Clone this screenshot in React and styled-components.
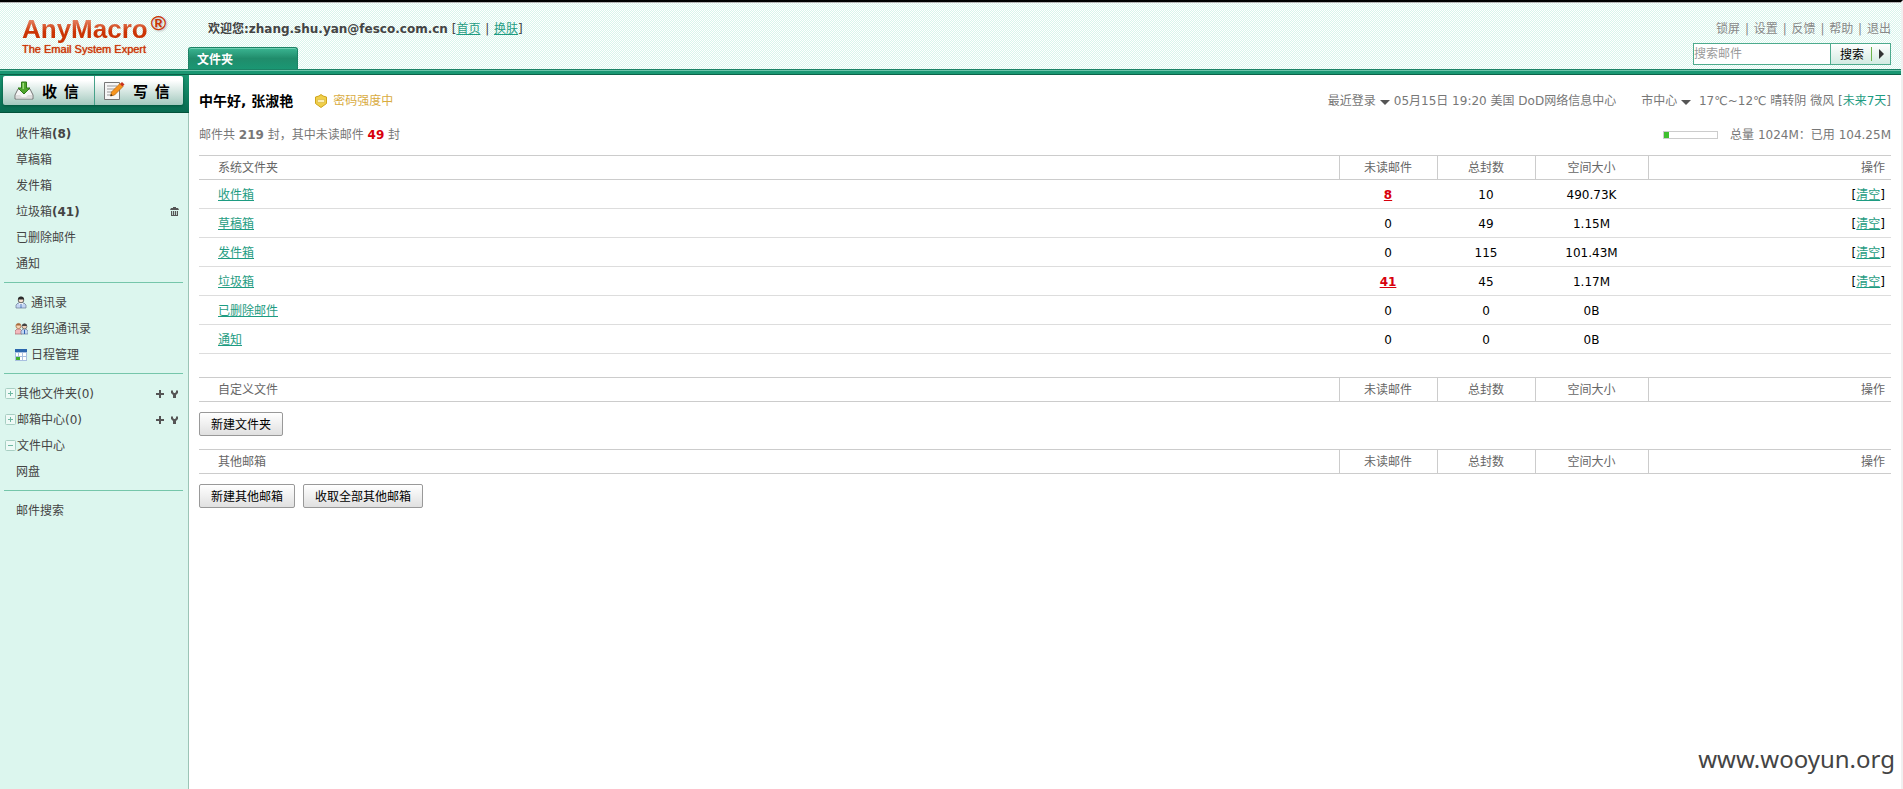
import React, { useState } from 'react';
import styled, { createGlobalStyle } from 'styled-components';

const GlobalStyle = createGlobalStyle`
  * {
    box-sizing: border-box;
  }
  body {
    margin: 0;
    background: #fff;
    color: #000;
    font: 12px/20px 'DejaVu Sans', 'Noto Sans CJK SC', sans-serif;
  }
  button, input {
    font: inherit;
  }
`;

const Page = styled.div`
  display: flex;
  flex-direction: column;
  min-height: 100vh;
  border-top: 2px solid #000;
  border-right: 2px solid #f0f0f0;
`;

/* ---------- header ---------- */

const Header = styled.header`
  display: flex;
  height: 67px;
  border-top: 1px solid #b4b4b4;
  background: repeating-conic-gradient(#ffffff 0% 25%, #d8f5ec 0% 50%) 0 0 / 2px 2px;
`;

const Logo = styled.div`
  width: 188px;
  flex-shrink: 0;
  padding: 11px 0 0 22px;
  font-family: 'Liberation Sans', Arial, sans-serif;
  color: #cb3404;
`;

const LogoName = styled.div`
  display: flex;
  align-items: flex-start;
  height: 26px;
  font-size: 26px;
  line-height: 30px;
  font-weight: bold;
  text-shadow: 1px 1px 2px #b8b8b8;

  span {
    background: linear-gradient(#e88a6c 15%, #cb3404 60%);
    background-clip: text;
    color: transparent;
    text-shadow: none;
  }
  sup {
    font-size: 21px;
    line-height: 18px;
    margin-left: 3px;
    vertical-align: top;
  }
`;

const Tagline = styled.div`
  font-size: 11px;
  line-height: 18px;
  text-shadow: 0 0 1px #cb3404;
`;

const HeaderLeft = styled.div`
  flex: 1;
  display: flex;
  flex-direction: column;
  justify-content: space-between;
`;

const Welcome = styled.div`
  padding: 16px 0 0 20px;
  color: #444;
`;

const Link = styled.a`
  color: ${(p) => p.$color || '#1e9c82'};
  font-weight: ${(p) => (p.$bold ? 'bold' : 'normal')};
  text-decoration: ${(p) => (p.$plain ? 'none' : 'underline')};
`;

const Bar = styled.span`
  margin: 0 1px;
`;

const Tab = styled.div`
  width: 110px;
  height: 22px;
  padding-left: 8px;
  border: 1px solid #1b8265;
  border-bottom: 0;
  border-radius: 3px 3px 0 0;
  background: linear-gradient(#3bb592, #208c6b 50%, #1a9773);
  box-shadow: inset 0 1px #6fd0b3;
  color: #fff;
  font-weight: bold;
  line-height: 24px;
`;

const HeaderRight = styled.div`
  display: flex;
  flex-direction: column;
  align-items: flex-end;
  padding: 16px 10px 0 0;
`;

const TopLinks = styled.nav`
  color: #888;
  white-space: nowrap;
`;

const SearchForm = styled.form`
  display: flex;
  height: 22px;
  width: 198px;
  margin-top: 4px;
  border: 1px solid #4dab8d;
`;

const SearchInput = styled.input`
  flex: 1;
  min-width: 0;
  padding: 0;
  border: 0;
  background: #fff;
  line-height: 18px;
  outline: none;

  &::placeholder {
    color: #999;
    opacity: 1;
  }
`;

const SearchButton = styled.button`
  width: 41px;
  padding: 1px 0 0 9px;
  border: 0;
  border-left: 1px solid #4dab8d;
  background: linear-gradient(#fff, #d3ebe2);
  line-height: 20px;
  text-align: left;
`;

const SearchMore = styled.button`
  display: flex;
  align-items: center;
  width: 19px;
  padding: 0;
  border: 0;
  background: linear-gradient(#fff, #d3ebe2);

  &::before {
    content: '';
    height: 14px;
    margin-right: 7px;
    border-left: 1px solid #6cb24c;
  }
`;

const Strip = styled.div`
  height: 6px;
  background: linear-gradient(#1b8265 1px, #6cc3aa 1px 2px, #1a9773 2px 5px, #0c6349 5px);
`;

/* ---------- sidebar ---------- */

const Body = styled.div`
  flex: 1;
  display: flex;
`;

const Sidebar = styled.aside`
  width: 189px;
  flex-shrink: 0;
  border-right: 1px solid #9cc4b6;
  background: #dcf6ee;
  color: #444;
`;

const ActionBar = styled.div`
  height: 38px;
  margin-right: -1px;
  padding: 1px 6px 7px 3px;
  border-bottom: 1px solid #02523a;
  background: linear-gradient(#1a9773, #086b50);
`;

const Actions = styled.div`
  display: flex;
  height: 100%;
  border-radius: 2px;
  background: linear-gradient(#fff 15%, #a3c9be);
  box-shadow: 0 1px 3px #02523a;
`;

const ActionButton = styled.button`
  flex: 1;
  display: flex;
  align-items: center;
  gap: 8px;
  padding: 0 0 0 ${(p) => (p.$divided ? 8 : 11)}px;
  border: 0;
  border-left: ${(p) => (p.$divided ? '1px solid #46a189' : '0')};
  background: none;
  font: bold 15px/24px 'Noto Sans CJK SC', sans-serif;
  white-space: pre;
`;

const Menu = styled.ul`
  margin: 0;
  padding: 0;
  list-style: none;

  & + & {
    margin: 6px 5px 0 4px;
    padding-top: 6px;
    border-top: 1px solid #75c6aa;
  }
`;

const MenuBox = styled.nav`
  padding-top: 7px;
`;

const MenuItem = styled.li`
  display: flex;
  align-items: center;
  height: 26px;
  padding-top: 1px;
  padding-left: ${(p) => p.$indent}px;

  a {
    color: inherit;
    text-decoration: none;
  }
`;

const ItemIcon = styled.span`
  display: flex;
  width: ${(p) => p.$width}px;
`;

const Tools = styled.span`
  display: flex;
  align-items: center;
  gap: 7px;
  margin-left: auto;
  margin-right: ${(p) => p.$right}px;
`;

const IconButton = styled.button`
  display: flex;
  padding: 0;
  border: 0;
  background: none;
  color: #555;
`;

/* ---------- content ---------- */

const Main = styled.main`
  flex: 1;
  display: flex;
  flex-direction: column;
  padding: 16px 10px 0;
`;

const InfoRow = styled.div`
  display: flex;
  align-items: center;
  height: 20px;
  margin-bottom: ${(p) => p.$gap}px;
  color: #777;
  white-space: nowrap;
`;

const Greeting = styled.h1`
  margin: 0 22px 0 0;
  color: #000;
  font-size: 14px;
  line-height: 20px;
`;

const Strength = styled.span`
  display: flex;
  align-items: center;
  gap: 6px;
  color: #d9ac3f;
`;

const Push = styled.span`
  display: flex;
  align-items: center;
  margin-left: auto;
`;

const Place = styled.span`
  display: flex;
  align-items: center;
  margin-left: 25px;
`;

const Caret = styled.i`
  margin: 2px 4px 0;
  border: 5px solid transparent;
  border-top-color: #555;
  border-bottom: 0;
`;

const Unread = styled.b`
  color: #d8000c;
`;

const Quota = styled.span`
  width: 55px;
  height: 8px;
  margin-right: 12px;
  border: 1px solid #ccc;
  background: #fff;
`;

const QuotaFill = styled.span`
  display: block;
  height: 6px;
  background: #3fc02f;
`;

const Table = styled.table`
  width: 100%;
  margin-bottom: ${(p) => p.$gap}px;
  border-collapse: collapse;
  table-layout: fixed;
`;

const Th = styled.th`
  width: ${(p) => p.$width || 'auto'};
  height: 24px;
  padding: ${(p) => p.$pad || '1px 0 0'};
  border: solid #ccc;
  border-width: ${(p) => (p.$first ? '1px 0' : '1px 0 1px 1px')};
  color: #666;
  font-weight: normal;
  text-align: ${(p) => p.$align || 'center'};
`;

const Td = styled.td`
  height: 29px;
  padding: ${(p) => p.$pad || '2px 0 0'};
  border-bottom: 1px solid #ddd;
  text-align: ${(p) => p.$align || 'center'};
`;

const ButtonRow = styled.div`
  display: flex;
  gap: 8px;
  margin-bottom: 13px;
`;

const Button = styled.button`
  height: 24px;
  padding: 1px 11px 0;
  border: 1px solid #999;
  border-radius: 2px;
  background: linear-gradient(#fff, #e0e0e0);
  line-height: 20px;
`;

const Watermark = styled.div`
  margin: auto -4px 14px auto;
  color: #444;
  font: 24px/32px 'Noto Sans', sans-serif;
`;

/* ---------- icons ---------- */

const InboxIcon = () => (
  <svg width="20" height="20" viewBox="0 0 20 20">
    <path d="M4 8h12l3 6v4H1v-4z" fill="#f4f4f4" stroke="#777" />
    <path d="M2 14h4l2 2h4l2-2h4v3.5H2z" fill="#ddd" />
    <path d="M7.500 1h5v6h3.500l-6 6-6-6h3.500z" fill="#4fa52c" stroke="#2f7a17" />
    <path d="M8.500 2h1.500v6h-1.500z" fill="#9bdc7a" />
  </svg>
);

const WriteIcon = () => (
  <svg width="22" height="20" viewBox="0 0 22 20">
    <path d="M1.500 1.500h15v17h-15z" fill="#f6f6f6" stroke="#777" />
    <path d="M4 5h10M4 8h8M4 11h5M4 14h4" stroke="#999" />
    <path d="M7.500 15l1-4 8.500-8.500 3 3L11.500 14z" fill="#f7941d" stroke="#b86a12" strokeWidth=".8" />
    <path d="M17 3l2-2 2.500 2.500-2 2z" fill="#c8321c" />
    <path d="M7.500 15l.6-2 1.400 1.400z" fill="#222" />
  </svg>
);

const PersonIcon = () => (
  <svg width="12" height="13" viewBox="0 0 12 13">
    <path d="M1 12V9l2-2h6l2 2v3z" fill="#c3d6f3" stroke="#6a7894" strokeWidth=".7" />
    <path d="M4 7h4l-2 5z" fill="#fff" />
    <path d="M5.500 8h1v4h-1z" fill="#2f62b4" />
    <circle cx="6" cy="4" r="2.800" fill="#f7e2d2" stroke="#444" strokeWidth=".8" />
    <path d="M3 3.500a3 3 0 016 0z" fill="#2a2a2a" />
  </svg>
);

const PeopleIcon = () => (
  <svg width="13" height="13" viewBox="0 0 13 13">
    <path d="M0 12V9l2-2h3l2 2v3z" fill="#f3b9bd" stroke="#a5676b" strokeWidth=".7" />
    <circle cx="3.500" cy="4" r="2.600" fill="#f7d6b8" stroke="#a0643a" strokeWidth=".7" />
    <path d="M1 3.500a2.600 2.600 0 015 0z" fill="#a86a3a" />
    <path d="M6 12V9l2-2h3l2 2v3z" fill="#c3d6f3" stroke="#6a7894" strokeWidth=".7" />
    <path d="M9 8h1v4h-1z" fill="#2f62b4" />
    <circle cx="9.500" cy="4.500" r="2.400" fill="#f2cfb4" stroke="#555" strokeWidth=".7" />
    <path d="M7 4a2.500 2.500 0 015 0z" fill="#444" />
  </svg>
);

const CalendarIcon = () => (
  <svg width="12" height="12" viewBox="0 0 12 12">
    <path d="M0 0h12v12H0z" fill="#a9c0e0" />
    <path d="M0 0h12v3H0z" fill="#2b66ad" />
    <path d="M1 4h2v3H1zM4 4h3v3H4zM8 4h3v3H8zM4 8h3v3H4zM8 8h3v3H8z" fill="#fff" />
    <path d="M1 8h4v3H1z" fill="#3faf2b" />
  </svg>
);

const TrashIcon = () => (
  <svg width="9" height="9" viewBox="0 0 9 9" fill="currentColor">
    <path d="M3 0h3v1h2l1 2H0l1-2h2zM1 4h7v5H1z" />
    <path d="M2.500 4v4M4.500 4v4M6.500 4v4" stroke="#dcf6ee" strokeWidth=".8" />
  </svg>
);

const PlusIcon = () => (
  <svg width="8" height="8" viewBox="0 0 8 8" fill="currentColor">
    <path d="M3 0h2v3h3v2H5v3H3V5H0V3h3z" />
  </svg>
);

const WrenchIcon = () => (
  <svg width="7" height="8" viewBox="0 0 7 8" fill="currentColor">
    <path d="M0 1l1-1 1 1v1l1 1h1l1-1V1l1-1 1 1v2L5 5v3H2V5L0 3z" />
  </svg>
);

const ToggleIcon = ({ open }) => (
  <svg width="11" height="11" viewBox="0 0 11 11" fill="none">
    <rect x=".5" y=".5" width="10" height="10" rx="1" fill="#eefaf6" stroke="#a8cfc3" />
    <path d={open ? 'M3 5.500h5' : 'M3 5.500h5M5.500 3v5'} stroke="#6fb8a2" />
  </svg>
);

const ShieldIcon = () => (
  <svg width="12" height="14" viewBox="0 0 12 14">
    <path d="M6 .5l2 1.500 3.500 1v6.500L6 13.500.5 9.500V3L4 2z" fill="#f0cf4a" stroke="#cfa51c" />
    <path d="M2.500 5.500h7v3h-7z" fill="#fbeeb4" stroke="#d9b53a" strokeWidth=".6" />
  </svg>
);

/* ---------- data ---------- */

const boxes = [
  { name: '收件箱', count: 8 },
  { name: '草稿箱' },
  { name: '发件箱' },
  { name: '垃圾箱', count: 41, trash: true },
  { name: '已删除邮件' },
  { name: '通知' },
];

const contacts = [
  { name: '通讯录', Icon: PersonIcon },
  { name: '组织通讯录', Icon: PeopleIcon },
  { name: '日程管理', Icon: CalendarIcon },
];

const folders = [
  { name: '收件箱', unread: 8, total: 10, size: '490.73K', clear: true },
  { name: '草稿箱', unread: 0, total: 49, size: '1.15M', clear: true },
  { name: '发件箱', unread: 0, total: 115, size: '101.43M', clear: true },
  { name: '垃圾箱', unread: 41, total: 45, size: '1.17M', clear: true },
  { name: '已删除邮件', unread: 0, total: 0, size: '0B' },
  { name: '通知', unread: 0, total: 0, size: '0B' },
];

const topLinks = ['锁屏', '设置', '反馈', '帮助', '退出'];

function FolderTable({ title, rows = [], gap }) {
  return (
    <Table $gap={gap}>
      <thead>
        <tr>
          <Th $first $align="left" $pad="1px 0 0 19px">{title}</Th>
          <Th $width="98px">未读邮件</Th>
          <Th $width="98px">总封数</Th>
          <Th $width="113px">空间大小</Th>
          <Th $width="243px" $align="right" $pad="1px 6px 0 0">操作</Th>
        </tr>
      </thead>
      <tbody>
        {rows.map((row) => (
          <tr key={row.name}>
            <Td $align="left" $pad="2px 0 0 19px"><Link href="#">{row.name}</Link></Td>
            <Td>
              {row.unread > 0 ? <Link href="#" $bold $color="#d8000c">{row.unread}</Link> : row.unread}
            </Td>
            <Td>{row.total}</Td>
            <Td>{row.size}</Td>
            <Td $align="right" $pad="2px 6px 0 0">
              {row.clear && <>[<Link href="#">清空</Link>]</>}
            </Td>
          </tr>
        ))}
      </tbody>
    </Table>
  );
}

function TreeItem({ name, count, open, tools }) {
  return (
    <MenuItem $indent={1}>
      <ItemIcon $width={12}><ToggleIcon open={open} /></ItemIcon>
      <a href="#">{name}{count !== undefined && `(${count})`}</a>
      {tools && (
        <Tools $right={5}>
          <IconButton aria-label="新建"><PlusIcon /></IconButton>
          <IconButton aria-label="管理"><WrenchIcon /></IconButton>
        </Tools>
      )}
    </MenuItem>
  );
}

function App() {
  const [keyword, setKeyword] = useState('');
  const used = 104.25;
  const quota = 1024;

  return (
    <Page>
      <GlobalStyle />
      <Header>
        <Logo>
          <LogoName><span>AnyMacro</span><sup>®</sup></LogoName>
          <Tagline>The Email System Expert</Tagline>
        </Logo>
        <HeaderLeft>
          <Welcome>
            <b>欢迎您:zhang.shu.yan@fesco.com.cn</b> [<Link href="#">首页</Link> <Bar>|</Bar> <Link href="#">换肤</Link>]
          </Welcome>
          <Tab>文件夹</Tab>
        </HeaderLeft>
        <HeaderRight>
          <TopLinks>
            {topLinks.map((name, i) => (
              <React.Fragment key={name}>
                {i > 0 && <> <Bar>|</Bar> </>}
                <Link href="#" $plain $color="#888">{name}</Link>
              </React.Fragment>
            ))}
          </TopLinks>
          <SearchForm onSubmit={(e) => e.preventDefault()}>
            <SearchInput
              aria-label="搜索邮件"
              placeholder="搜索邮件"
              value={keyword}
              onChange={(e) => setKeyword(e.target.value)}
            />
            <SearchButton type="submit">搜索</SearchButton>
            <SearchMore type="button" aria-label="高级搜索">
              <svg width="5" height="10" viewBox="0 0 5 10"><path d="M0 0l5 5-5 5z" fill="#333" /></svg>
            </SearchMore>
          </SearchForm>
        </HeaderRight>
      </Header>
      <Strip />
      <Body>
        <Sidebar>
          <ActionBar>
            <Actions>
              <ActionButton><InboxIcon />{'收  信'}</ActionButton>
              <ActionButton $divided><WriteIcon />{'写  信'}</ActionButton>
            </Actions>
          </ActionBar>
          <MenuBox>
            <Menu>
              {boxes.map((box) => (
                <MenuItem key={box.name} $indent={16}>
                  <a href="#">{box.name}{box.count && <b>({box.count})</b>}</a>
                  {box.trash && (
                    <Tools $right={9}>
                      <IconButton aria-label="清空垃圾箱"><TrashIcon /></IconButton>
                    </Tools>
                  )}
                </MenuItem>
              ))}
            </Menu>
            <Menu>
              {contacts.map(({ name, Icon }) => (
                <MenuItem key={name} $indent={11}>
                  <ItemIcon $width={16}><Icon /></ItemIcon>
                  <a href="#">{name}</a>
                </MenuItem>
              ))}
            </Menu>
            <Menu>
              <TreeItem name="其他文件夹" count={0} tools />
              <TreeItem name="邮箱中心" count={0} tools />
              <TreeItem name="文件中心" open />
              <MenuItem $indent={12}><a href="#">网盘</a></MenuItem>
            </Menu>
            <Menu>
              <MenuItem $indent={12}><a href="#">邮件搜索</a></MenuItem>
            </Menu>
          </MenuBox>
        </Sidebar>
        <Main>
          <InfoRow $gap={14}>
            <Greeting>中午好, 张淑艳</Greeting>
            <Strength><ShieldIcon />密码强度中</Strength>
            <Push>
              最近登录<Caret />05月15日 19:20 美国 DoD网络信息中心
              <Place>
                市中心<Caret />
                &nbsp;17℃~12℃ 晴转阴 微风 [<Link href="#" $plain>未来7天</Link>]
              </Place>
            </Push>
          </InfoRow>
          <InfoRow $gap={10}>
            <span>邮件共 <b>219</b> 封，其中未读邮件 <Unread>49</Unread> 封</span>
            <Push>
              <Quota><QuotaFill style={{ width: `${(used / quota) * 100}%` }} /></Quota>
              总量 {quota}M：已用 {used}M
            </Push>
          </InfoRow>
          <FolderTable title="系统文件夹" rows={folders} gap={23} />
          <FolderTable title="自定义文件" gap={10} />
          <ButtonRow>
            <Button>新建文件夹</Button>
          </ButtonRow>
          <FolderTable title="其他邮箱" gap={10} />
          <ButtonRow>
            <Button>新建其他邮箱</Button>
            <Button>收取全部其他邮箱</Button>
          </ButtonRow>
          <Watermark>www.wooyun.org</Watermark>
        </Main>
      </Body>
    </Page>
  );
}

export default App;
